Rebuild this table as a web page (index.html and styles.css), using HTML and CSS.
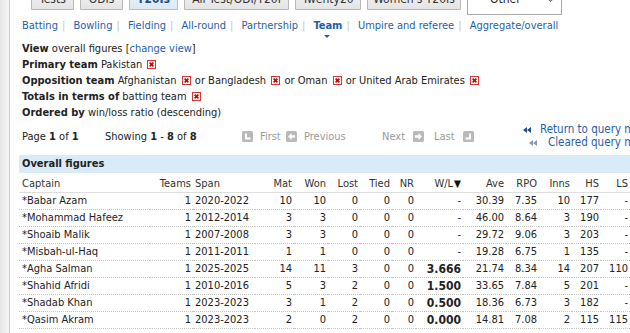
FILE: index.html
```html
<!DOCTYPE html>
<html lang="en">
<head>
<meta charset="utf-8">
<title>Statsguru - Pakistan T20I captains</title>
<link rel="stylesheet" href="styles.css">
</head>
<body>
<div class="page">
  <div class="tabs">
    <span class="tab t1">Tests</span>
    <span class="tab t2">ODIs</span>
    <span class="tab t3 active">T20Is</span>
    <span class="tab t4">All Test/ODI/T20I</span>
    <span class="tab t5">Twenty20</span>
    <span class="tab t6">Women's T20Is</span>
    <span class="select"><span class="seltext">Other</span><span class="caret"></span></span>
  </div>

  <nav class="subnav">
    <a href="#">Batting</a><span class="sep">|</span>
    <a href="#">Bowling</a><span class="sep">|</span>
    <a href="#">Fielding</a><span class="sep">|</span>
    <a href="#">All-round</a><span class="sep">|</span>
    <a href="#">Partnership</a><span class="sep">|</span>
    <a href="#" class="current">Team</a><span class="sep">|</span>
    <a href="#">Umpire and referee</a><span class="sep">|</span>
    <a href="#">Aggregate/overall</a>
  </nav>

  <div class="filters">
    <div class="fline"><b>View</b> overall figures [<a href="#">change view</a>]</div>
    <div class="fline"><b>Primary team</b> Pakistan <span class="rm"><svg viewBox="0 0 9 9" width="9" height="9"><rect x="0.5" y="0.5" width="8" height="8" fill="#fff" stroke="#d23a3a"/><path d="M2.6 2.6 L6.4 6.4 M6.4 2.6 L2.6 6.4" stroke="#c00" stroke-width="1.6"/></svg></span></div>
    <div class="fline"><b>Opposition team</b> Afghanistan <span class="rm"><svg viewBox="0 0 9 9" width="9" height="9"><rect x="0.5" y="0.5" width="8" height="8" fill="#fff" stroke="#d23a3a"/><path d="M2.6 2.6 L6.4 6.4 M6.4 2.6 L2.6 6.4" stroke="#c00" stroke-width="1.6"/></svg></span> or Bangladesh <span class="rm"><svg viewBox="0 0 9 9" width="9" height="9"><rect x="0.5" y="0.5" width="8" height="8" fill="#fff" stroke="#d23a3a"/><path d="M2.6 2.6 L6.4 6.4 M6.4 2.6 L2.6 6.4" stroke="#c00" stroke-width="1.6"/></svg></span> or Oman <span class="rm"><svg viewBox="0 0 9 9" width="9" height="9"><rect x="0.5" y="0.5" width="8" height="8" fill="#fff" stroke="#d23a3a"/><path d="M2.6 2.6 L6.4 6.4 M6.4 2.6 L2.6 6.4" stroke="#c00" stroke-width="1.6"/></svg></span> or United Arab Emirates <span class="rm"><svg viewBox="0 0 9 9" width="9" height="9"><rect x="0.5" y="0.5" width="8" height="8" fill="#fff" stroke="#d23a3a"/><path d="M2.6 2.6 L6.4 6.4 M6.4 2.6 L2.6 6.4" stroke="#c00" stroke-width="1.6"/></svg></span></div>
    <div class="fline"><b>Totals in terms of</b> batting team <span class="rm"><svg viewBox="0 0 9 9" width="9" height="9"><rect x="0.5" y="0.5" width="8" height="8" fill="#fff" stroke="#d23a3a"/><path d="M2.6 2.6 L6.4 6.4 M6.4 2.6 L2.6 6.4" stroke="#c00" stroke-width="1.6"/></svg></span></div>
    <div class="fline"><b>Ordered by</b> win/loss ratio (descending)</div>
  </div>

  <div class="pager">
    <span class="pageinfo">Page <b>1</b> of <b>1</b></span>
    <span class="showing">Showing <b>1</b> - <b>8</b> of <b>8</b></span>
    <span class="pbtns">
      <svg class="pico" viewBox="0 0 11 11" width="11" height="11"><rect width="11" height="11" rx="1.5" fill="#b9b9b9"/><path d="M3 2.5 H5 V6.5 H8.5 V8.5 H3 Z" fill="#fff"/></svg>
      <span class="plabel first">First</span>
      <svg class="pico" viewBox="0 0 11 11" width="11" height="11"><rect width="11" height="11" rx="1.5" fill="#b9b9b9"/><path d="M2 5.5 L5.5 2 V4.2 H9 V6.8 H5.5 V9 Z" fill="#fff"/></svg>
      <span class="plabel prev">Previous</span>
      <span class="plabel next">Next</span>
      <svg class="pico" viewBox="0 0 11 11" width="11" height="11"><rect width="11" height="11" rx="1.5" fill="#b9b9b9"/><path d="M9 5.5 L5.5 2 V4.2 H2 V6.8 H5.5 V9 Z" fill="#fff"/></svg>
      <span class="plabel last">Last</span>
      <svg class="pico" viewBox="0 0 11 11" width="11" height="11"><rect width="11" height="11" rx="1.5" fill="#b9b9b9"/><path d="M6 2.5 H8 V8.5 H2.5 V6.5 H6 Z" fill="#fff"/></svg>
    </span>
    <span class="back">
      <a href="#" class="backline"><svg viewBox="0 0 8 6" width="8" height="6"><path d="M0 3 L4 0 V6 Z M4 3 L8 0 V6 Z" fill="#22508a"/></svg>Return to query menu</a>
      <a href="#" class="backline second"><svg viewBox="0 0 8 6" width="8" height="6"><path d="M0 3 L4 0 V6 Z M4 3 L8 0 V6 Z" fill="#8a9bb0"/></svg>Cleared query menu</a>
    </span>
  </div>

  <div class="results">
    <div class="caption">Overall figures</div>
    <table class="stats">
      <colgroup>
        <col class="c-captain"><col class="c-teams"><col class="c-span"><col class="c-mat"><col class="c-won"><col class="c-lost"><col class="c-tied"><col class="c-nr"><col class="c-wl"><col class="c-ave"><col class="c-rpo"><col class="c-inns"><col class="c-hs"><col class="c-ls">
      </colgroup>
      <thead>
        <tr><th class="l">Captain</th><th>Teams</th><th class="l">Span</th><th>Mat</th><th>Won</th><th>Lost</th><th>Tied</th><th>NR</th><th>W/L<span class="sort">&#9660;</span></th><th>Ave</th><th>RPO</th><th>Inns</th><th>HS</th><th>LS</th></tr>
      </thead>
      <tbody>
        <tr><td class="l">*Babar Azam</td><td>1</td><td class="l">2020-2022</td><td>10</td><td>10</td><td>0</td><td>0</td><td>0</td><td>-</td><td>30.39</td><td>7.35</td><td>10</td><td>177</td><td>-</td></tr>
        <tr><td class="l">*Mohammad Hafeez</td><td>1</td><td class="l">2012-2014</td><td>3</td><td>3</td><td>0</td><td>0</td><td>0</td><td>-</td><td>46.00</td><td>8.64</td><td>3</td><td>190</td><td>-</td></tr>
        <tr><td class="l">*Shoaib Malik</td><td>1</td><td class="l">2007-2008</td><td>3</td><td>3</td><td>0</td><td>0</td><td>0</td><td>-</td><td>29.72</td><td>9.06</td><td>3</td><td>203</td><td>-</td></tr>
        <tr><td class="l">*Misbah-ul-Haq</td><td>1</td><td class="l">2011-2011</td><td>1</td><td>1</td><td>0</td><td>0</td><td>0</td><td>-</td><td>19.28</td><td>6.75</td><td>1</td><td>135</td><td>-</td></tr>
        <tr><td class="l">*Agha Salman</td><td>1</td><td class="l">2025-2025</td><td>14</td><td>11</td><td>3</td><td>0</td><td>0</td><td class="b">3.666</td><td>21.74</td><td>8.34</td><td>14</td><td>207</td><td>110</td></tr>
        <tr><td class="l">*Shahid Afridi</td><td>1</td><td class="l">2010-2016</td><td>5</td><td>3</td><td>2</td><td>0</td><td>0</td><td class="b">1.500</td><td>33.65</td><td>7.84</td><td>5</td><td>201</td><td>-</td></tr>
        <tr><td class="l">*Shadab Khan</td><td>1</td><td class="l">2023-2023</td><td>3</td><td>1</td><td>2</td><td>0</td><td>0</td><td class="b">0.500</td><td>18.36</td><td>6.73</td><td>3</td><td>182</td><td>-</td></tr>
        <tr><td class="l">*Qasim Akram</td><td>1</td><td class="l">2023-2023</td><td>2</td><td>0</td><td>2</td><td>0</td><td>0</td><td class="b">0.000</td><td>14.81</td><td>7.08</td><td>2</td><td>115</td><td>115</td></tr>
      </tbody>
    </table>
  </div>
</div>
</body>
</html>
```

FILE: styles.css
```css
html, body {
  margin: 0;
  padding: 0;
}
body {
  width: 630px;
  height: 333px;
  overflow: hidden;
  background: linear-gradient(to right, #e6e6e6 0, #f6f6f6 9px);
  font-family: "DejaVu Sans Condensed", "DejaVu Sans", sans-serif;
  font-stretch: condensed;
  font-size: 11px;
  color: #222;
}
a {
  color: #1f5ea8;
  text-decoration: none;
}
.page {
  margin-left: 9px;
  border-left: 1px solid #c9c9c9;
  background: #fff;
  height: 333px;
  padding-left: 12px;
  overflow: hidden;
}

/* tabs */
.tabs {
  display: flex;
  align-items: flex-end;
  gap: 6px;
  height: 15px;
  overflow: hidden;
  margin-left: 9px;
}
.tab {
  box-sizing: border-box;
  flex: none;
  height: 22px;
  margin-bottom: 5px;
  padding-top: 3px;
  line-height: 14px;
  font-size: 12px;
  text-align: center;
  color: #333;
  background: linear-gradient(#f4f4f4, #e4e4e4);
  border: 1px solid #b9b9b9;
  border-radius: 3px 3px 0 0;
}
.tab.active {
  background: linear-gradient(#eef5fc, #dbe8f6);
  border-color: #a9c1dc;
  color: #1b4f8c;
  font-weight: bold;
}
.t1 { width: 43px; }
.t2 { width: 43px; }
.t3 { width: 49px; }
.t4 { width: 105px; }
.t5 { width: 66px; }
.t6 { width: 94px; }
.select {
  position: relative;
  box-sizing: border-box;
  flex: none;
  width: 95px;
  height: 22px;
  padding: 0 0 0 22px;
  font-size: 12px;
  color: #222;
  background: #fff;
  border: 1px solid #a8a8a8;
}
.seltext {
  display: block;
  height: 10px;
  line-height: 10px;
}
.caret {
  position: absolute;
  right: 8px;
  top: 2px;
  width: 4px;
  height: 4px;
  border-right: 1px solid #666;
  border-bottom: 1px solid #666;
  transform: rotate(45deg);
}

/* sub navigation */
.subnav {
  margin-top: 4px;
  line-height: 14px;
  height: 14px;
  white-space: nowrap;
  font-size: 11px;
}
.sep {
  color: #c4c4c4;
  margin: 0 5px 0 4px;
}
.subnav a.current {
  position: relative;
  font-weight: bold;
}
.subnav a.current::after {
  content: "";
  position: absolute;
  left: 11px;
  top: 16px;
  border-left: 3px solid transparent;
  border-right: 3px solid transparent;
  border-top: 3px solid #1f5ea8;
}

/* filters */
.filters {
  margin-top: 8px;
}
.fline {
  height: 16px;
  line-height: 16px;
  white-space: nowrap;
}
.rm {
  display: inline-block;
  margin-left: 2px;
  margin-right: 1px;
  vertical-align: -1px;
  line-height: 0;
}

/* pager */
.pager {
  display: flex;
  align-items: center;
  height: 27px;
  margin-top: 2px;
  white-space: nowrap;
}
.pageinfo {
  flex: none;
  width: 83px;
}
.showing {
  flex: none;
  width: 137px;
}
.pbtns {
  flex: none;
  display: flex;
  align-items: center;
  width: 281px;
  color: #9a9a9a;
}
.pico {
  flex: none;
  display: block;
}
.plabel.first { margin: 0 5px 0 7px; width: 21px; }
.plabel.prev { margin-left: 7px; width: 78px; }
.plabel.next { width: 23px; margin-right: 8px; }
.plabel.last { margin: 0 9px 0 10px; width: 20px; }
.back {
  flex: none;
  display: flex;
  flex-direction: column;
  margin-top: -1px;
}
.backline {
  display: flex;
  align-items: center;
  line-height: 13px;
  font-size: 11.5px;
}
.backline svg {
  flex: none;
  margin-right: 9px;
}
.backline.second {
  margin-left: 6px;
}
.backline.second svg {
  margin-right: 11px;
}

/* results */
.results {
  margin-top: 5px;
  margin-left: -3px;
  width: 640px;
}
.caption {
  height: 18px;
  line-height: 18px;
  padding-left: 3px;
  background: #d9eaf8;
  font-weight: bold;
}
.stats {
  table-layout: fixed;
  border-collapse: collapse;
  width: 611px;
}
.c-captain { width: 131px; }
.c-teams { width: 43px; }
.c-span { width: 62px; }
.c-mat { width: 39px; }
.c-won { width: 34px; }
.c-lost { width: 32px; }
.c-tied { width: 32px; }
.c-nr { width: 24px; }
.c-wl { width: 47px; }
.c-ave { width: 43px; }
.c-rpo { width: 33px; }
.c-inns { width: 33px; }
.c-hs { width: 29px; }
.c-ls { width: 29px; }
.stats th, .stats td {
  padding: 0 2px;
  text-align: right;
  white-space: nowrap;
  overflow: visible;
}
.stats th {
  font-weight: normal;
  height: 17px;
  padding-top: 2px;
  line-height: 17px;
  border-bottom: 1px solid #dedede;
  color: #333;
}
.stats td {
  height: 16px;
  line-height: 16px;
  border-bottom: 1px dotted #c4c4c4;
}
.stats .l {
  text-align: left;
}
.stats th.l:first-child, .stats td.l:first-child {
  padding-left: 3px;
}
.stats td.b {
  font-weight: bold;
  font-size: 12px;
}
.sort {
  font-size: 10px;
  margin-left: 1px;
  color: #111;
}
```
